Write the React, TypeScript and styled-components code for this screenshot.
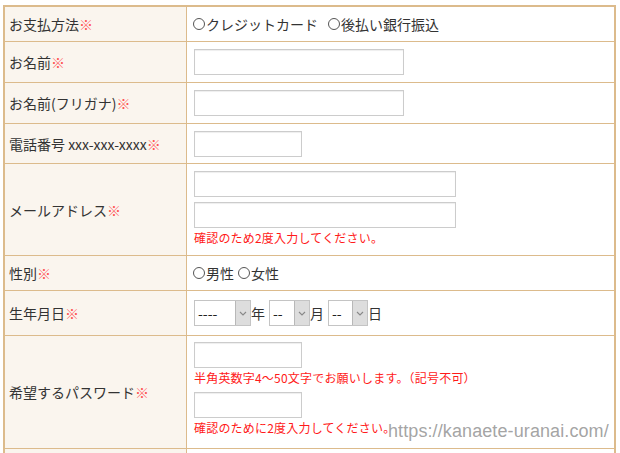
import React from 'react';
import styled, { createGlobalStyle } from 'styled-components';

const GlobalStyle = createGlobalStyle`
	html, body {
		margin: 0;
		padding: 0;
		overflow: hidden;
		background: #fff;
	}
	body {
		font-family: 'Noto Sans CJK JP', 'Noto Sans', sans-serif;
		color: #333;
	}
`;

const Page = styled.div`
	position: relative;
	padding: 5px 4px 0 3px;
`;

const FormTable = styled.table`
	width: 613px;
	border-collapse: collapse;
	table-layout: fixed;
	border: 2px solid #dcbb8c;
	font-size: 14px;
	line-height: 20px;
`;

const LabelCell = styled.th`
	width: 171px;
	padding: 0 6px 0 4px;
	background: #faf5ee;
	border: 1px solid #dcbb8c;
	text-align: left;
	font-weight: normal;
	vertical-align: middle;
	white-space: nowrap;
`;

const Required = styled.span`
	color: #ff5252;
`;

const FieldCell = styled.td<{ $pad?: string }>`
	padding: ${(p) => p.$pad || '7px 7px'};
	border: 1px solid #dcbb8c;
	vertical-align: middle;
`;

const TextInput = styled.input<{ $width: number }>`
	display: block;
	box-sizing: border-box;
	width: ${(p) => p.$width}px;
	height: 26px;
	margin: 0;
	padding: 0 4px;
	border: 1px solid #cccccc;
	box-shadow: inset 0 1px 1px #eee;
	background: #fff;
	font: inherit;

	& + & {
		margin-top: 5px;
	}
`;

const Note = styled.div<{ $gap?: number }>`
	color: #ff1a1a;
	font-size: 12px;
	line-height: 20px;
	letter-spacing: 0.2px;
	margin-bottom: ${(p) => p.$gap || 0}px;
`;

const RadioGroup = styled.div<{ $gap: number }>`
	display: flex;
	align-items: center;
	gap: ${(p) => p.$gap}px;
	margin-left: -1px;
`;

const RadioItem = styled.label`
	display: inline-flex;
	align-items: center;
`;

const Circle = styled.span`
	display: inline-block;
	box-sizing: border-box;
	width: 12px;
	height: 12px;
	margin-right: 1px;
	border: 1.5px solid #555;
	border-radius: 50%;
`;

const DateRow = styled.div`
	display: flex;
	align-items: center;
`;

const SelectBox = styled.div<{ $width: number }>`
	display: flex;
	box-sizing: border-box;
	width: ${(p) => p.$width}px;
	height: 26px;
	border: 1px solid #c4c4c4;
	background: #fff;
`;

const SelectValue = styled.span`
	flex: 1;
	padding-left: 3px;
	line-height: 24px;
	color: #222;
`;

const SelectArrow = styled.span`
	display: flex;
	align-items: center;
	justify-content: center;
	width: 14px;
	background: #dddddd;
	border-left: 1px solid #b8b8b8;
`;

const DateUnit = styled.span`
	margin-right: 4px;
`;

const Watermark = styled.div`
	position: absolute;
	left: 388px;
	top: 420px;
	font-family: 'Liberation Sans', Arial, sans-serif;
	font-size: 18px;
	line-height: 22px;
	color: rgba(140, 140, 140, 0.8);
	letter-spacing: 0.1px;
	pointer-events: none;
`;

const Chevron = () => (
	<svg width='8' height='5' viewBox='0 0 8 5'>
		<path d='M1 1l3 3 3-3' fill='none' stroke='#888' strokeWidth='1.1' />
	</svg>
);

const Select = ({ value, width }: { value: string; width: number }) => (
	<SelectBox $width={width}>
		<SelectValue>{value}</SelectValue>
		<SelectArrow>
			<Chevron />
		</SelectArrow>
	</SelectBox>
);

const Label = ({ text }: { text: string }) => (
	<LabelCell>
		{text}
		<Required>※</Required>
	</LabelCell>
);

function App() {
	return (
		<Page>
			<GlobalStyle />
			<FormTable>
				<tbody>
					<tr>
						<Label text='お支払方法' />
						<FieldCell>
							<RadioGroup $gap={10}>
								<RadioItem>
									<Circle />
									クレジットカード
								</RadioItem>
								<RadioItem>
									<Circle />
									後払い銀行振込
								</RadioItem>
							</RadioGroup>
						</FieldCell>
					</tr>
					<tr>
						<Label text='お名前' />
						<FieldCell>
							<TextInput $width={210} />
						</FieldCell>
					</tr>
					<tr>
						<Label text='お名前(フリガナ)' />
						<FieldCell>
							<TextInput $width={210} />
						</FieldCell>
					</tr>
					<tr>
						<Label text='電話番号 xxx-xxx-xxxx' />
						<FieldCell $pad='7px 7px 6px'>
							<TextInput $width={108} />
						</FieldCell>
					</tr>
					<tr>
						<Label text='メールアドレス' />
						<FieldCell>
							<TextInput $width={262} />
							<TextInput $width={262} />
							<Note>確認のため2度入力してください。</Note>
						</FieldCell>
					</tr>
					<tr>
						<Label text='性別' />
						<FieldCell>
							<RadioGroup $gap={4}>
								<RadioItem>
									<Circle />
									男性
								</RadioItem>
								<RadioItem>
									<Circle />
									女性
								</RadioItem>
							</RadioGroup>
						</FieldCell>
					</tr>
					<tr>
						<Label text='生年月日' />
						<FieldCell $pad='9px 7px'>
							<DateRow>
								<Select value='----' width={57} />
								<DateUnit>年</DateUnit>
								<Select value='--' width={41} />
								<DateUnit>月</DateUnit>
								<Select value='--' width={40} />
								<DateUnit>日</DateUnit>
							</DateRow>
						</FieldCell>
					</tr>
					<tr>
						<Label text='希望するパスワード' />
						<FieldCell $pad='6px 7px 10px'>
							<TextInput $width={108} />
							<Note $gap={4}>半角英数字4～50文字でお願いします。（記号不可）</Note>
							<TextInput $width={108} />
							<Note>確認のために2度入力してください。</Note>
						</FieldCell>
					</tr>
					<tr>
						<LabelCell>&nbsp;</LabelCell>
						<FieldCell>&nbsp;</FieldCell>
					</tr>
				</tbody>
			</FormTable>
			<Watermark>https://kanaete-uranai.com/</Watermark>
		</Page>
	);
}

export default App;
